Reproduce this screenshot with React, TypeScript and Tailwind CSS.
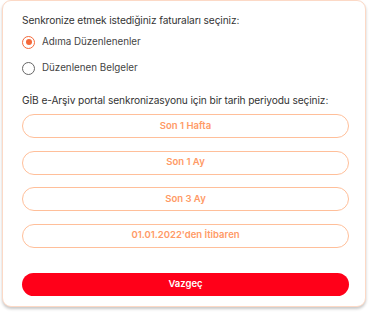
import React from "react";

const periods = ["Son 1 Hafta", "Son 1 Ay", "Son 3 Ay", "01.01.2022'den İtibaren"];

export default function App() {
  return (
    <div className="w-[370px] h-[313px] bg-white" style={{ fontFamily: "Inter, 'Noto Sans', sans-serif" }}>
      <div className="ml-[2px] mr-[4px] h-[307px] rounded-[9px] border border-[#fcd9c6] bg-white shadow-[0_2px_3px_rgba(0,0,0,0.22)] pl-[19px] pr-[16px] pt-[12px] flex flex-col">
        <div className="text-[10.2px] leading-[14px] text-[#333] tracking-[-0.12px]">Senkronize etmek istediğiniz faturaları seçiniz:</div>
        <div className="mt-[8px] flex items-center gap-[7px] h-[14px]">
          <span className="w-[13px] h-[13px] rounded-full border-[1.5px] border-[#f4693a] flex items-center justify-center">
            <span className="w-[6px] h-[6px] rounded-full bg-[#f4693a]" />
          </span>
          <span className="text-[9.8px] text-[#444]">Adıma Düzenlenenler</span>
        </div>
        <div className="mt-[12px] flex items-center gap-[7px] h-[14px]">
          <span className="w-[13px] h-[13px] rounded-full border-[1.5px] border-[#666]" />
          <span className="text-[9.8px] text-[#444]">Düzenlenen Belgeler</span>
        </div>
        <div className="mt-[18px] text-[10.2px] leading-[14px] text-[#333] tracking-[-0.12px]">GİB e-Arşiv portal senkronizasyonu için bir tarih periyodu seçiniz:</div>
        <div className="mt-[7px] flex flex-col gap-[12.5px]">
          {periods.map((p) => (
            <button key={p} className="h-[24px] w-full rounded-full border border-[#ffbf9a] bg-white text-[9.5px] font-semibold text-[#ff9a66]">
              {p}
            </button>
          ))}
        </div>
        <button className="mt-[25px] h-[23px] w-full rounded-full bg-[#ff0019] text-[9.5px] font-semibold text-white">Vazgeç</button>
      </div>
    </div>
  );
}
